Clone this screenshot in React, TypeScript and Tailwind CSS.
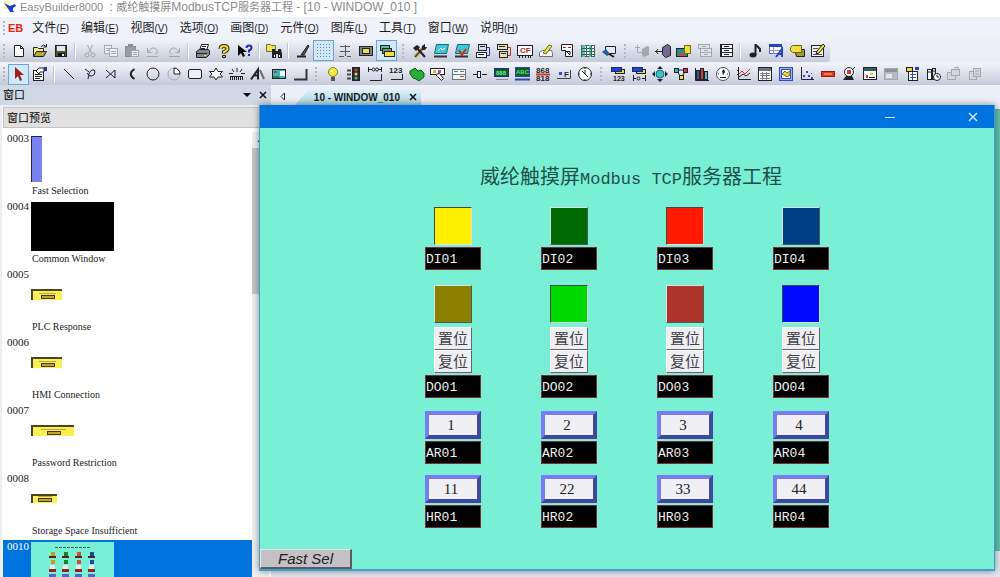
import React from 'react';
import type { ReactNode } from 'react';

type Icon = [label: string, art: ReactNode, active?: boolean];

const K = '#20222a';
const GREY = '#a4a6b0';

/* small building blocks shared by several toolbar drawings */
const line = (d: string, stroke = K, width = 1) => (
  <path d={d} stroke={stroke} strokeWidth={width} fill="none" />
);
const box = (x: number, y: number, w: number, h: number, fill = '#fff', stroke = K) => (
  <rect x={x + 0.5} y={y + 0.5} width={w - 1} height={h - 1} fill={fill} stroke={stroke} />
);
const caption = (text: string, x: number, y: number, fill = K, size = 7) => (
  <text x={x} y={y} fontSize={size} fontWeight="bold" fontFamily="Liberation Sans, sans-serif" fill={fill}>
    {text}
  </text>
);

const fileIcons: Icon[] = [
  ['New', <path d="M3.5 2.5h6l3 3v8h-9zM9.5 2.5v3h3" fill="#fff" stroke={K} />],
  ['Open', <>
    <path d="M1.5 13.5v-9h4l1 1h5v3" fill="#f4ee7a" stroke={K} />
    <path d="M1.5 13.5l3-5h10l-3 5z" fill="#b3a93a" stroke={K} />
    {line('M9 3.5q3-3 5 0M14.500 1v3h-3')}
  </>],
  ['Save', <>
    {box(2, 2, 12, 12, '#55562e')}
    <path d="M4 3h8v5H4z" fill="#e6e8ef" />
    <path d="M5 10h7v4H5z" fill="#16171b" />
    <path d="M9 11h2v2H9z" fill="#e6e8ef" />
  </>],
];

const editIcons: Icon[] = [
  ['Cut', <>
    {line('M5.500 2l4 8M10.500 2l-4 8', GREY)}
    <circle cx="5" cy="12" r="2" fill="none" stroke={GREY} />
    <circle cx="11" cy="12" r="2" fill="none" stroke={GREY} />
  </>],
  ['Copy', <>
    {box(1, 2, 8, 9, '#eceef5', GREY)}
    {box(6, 5, 9, 9, '#eceef5', GREY)}
    {line('M3 5.500h3M3 7.500h3M8 8.500h5M8 10.500h5', GREY)}
  </>],
  ['Paste', <>
    {box(1, 3, 11, 11, '#9a9ca5', '#8b8d96')}
    <path d="M4 1h5v3H4z" fill="#8b8d96" />
    {box(7, 7, 8, 7, '#eceef5', GREY)}
    {line('M9 9.500h4M9 11.500h4', GREY)}
  </>],
  ['Undo', line('M2.500 5v4.500h4M3 9q5-7 9-2q2 3-2 4M2 13.500h11', GREY)],
  ['Redo', line('M13.500 5v4.500h-4M13 9q-5-7-9-2q-2 3 2 4M3 13.500h11', GREY)],
];

const helpIcons: Icon[] = [
  ['Print', <>
    <path d="M4.500 7.500l2-6h7l-2 6z" fill="#fff" stroke={K} />
    <path d="M1.500 8.500l3-2h9l1 1v4l-3 3h-10z" fill="#85868c" stroke={K} />
    {line('M2 10.500h10M7 3.500h4M6 5.500h4', K)}
    <path d="M9 12h2v1H9z" fill="#f0e33a" />
  </>],
  ['Help', <>
    <path d="M4.500 6q0-3 3.500-3t3.500 2.500q0 2-3.500 3.500v1.500" stroke={K} strokeWidth="4" fill="none" />
    <path d="M4.500 6q0-3 3.500-3t3.500 2.500q0 2-3.500 3.500v1" stroke="#f4df21" strokeWidth="2" fill="none" />
    <path d="M6.500 12.500h3v2h-3z" fill="#e8d21f" stroke={K} />
  </>],
  ['Context help', <>
    <path d="M1 2v11l3-3 2 4 2-1-2-4h4z" fill="#08090c" />
    <path d="M9.500 5q0-2.500 2.500-2.500t2.500 2q0 2-2.500 3v2M12 11v2" stroke="#1c2fa8" strokeWidth="2" fill="none" />
  </>],
];

const findIcons: Icon[] = [
  ['Find', <>
    <path d="M.5 1.500h4l1 1h4v6h-9z" fill="#e9e45c" stroke="#77732a" />
    <path d="M6 6h3v2h3V6h3l1 5v4h-4v-4h-2v4H6v-4z" fill={K} />
    <path d="M8 12h1v2H8zM13 12h1v2h-1z" fill="#fff" />
  </>],
];

const viewIcons: Icon[] = [
  ['Pen', <>
    <path d="M6 12l7-10 1 1-5 9z" fill="#4f5158" stroke={K} />
    {line('M2 13.500h9', K, 2)}
  </>],
  ['Grid', <g fill="#4b83c3">
    {[1, 4, 7, 10, 13].map((y) => [1, 4, 7, 10, 13].map((x) => <rect key={`${x}-${y}`} x={x} y={y} width="1" height="1" />))}
  </g>, true],
  ['Align', line('M3 3.500h10M8.500 2v11M3 8.500h10M2 13.500h5M10 13.500h4', '#555862')],
  ['Window', <>{box(1, 3, 14, 10, '#7d8088')}{box(4, 5, 8, 6, '#f2e13b')}</>],
  ['Layers', <>
    {box(1, 2, 10, 6, '#67b5a3')}{box(3, 5, 10, 6, '#5aa06c')}{box(5, 8, 11, 6, '#f2e13b')}
  </>, true],
];

const compileIcons: Icon[] = [
  ['System parameters', <>
    {line('M3 14l8-9', '#b28b28', 3)}{line('M3 14l8-9')}
    {line('M5 5l8 9', K, 2)}
    <path d="M1 5l4-3 3 2-4 4zM10 3l3-2v3h2l-2 3h-3z" fill={K} />
  </>],
  ['Online simulation', <>
    <path d="M3.500 1.500h12l-2 9h-12z" fill="#41c6d6" stroke="#126d7d" />
    {line('M5 8l3-3 1 2 3-2', '#fff')}{line('M1 13.500h13', '#333', 2)}
  </>],
  ['Offline simulation', <>
    <path d="M3.500 1.500h12l-2 9h-12z" fill="#41c6d6" stroke="#126d7d" />
    {line('M5 7l3 5 4-6', '#cf2e22', 2)}{line('M1 13.500h13', '#333', 2)}
  </>],
  ['Download', <>
    {box(3, 1, 9, 7, '#d9dce6')}{box(1, 9, 11, 6, '#f4f5f9')}
    {line('M5 3.500h5M3 11.500h6')}{line('M12 4.500h2.500v8H12', '#2334b4')}
  </>],
  ['Upload', <>
    {box(1, 1, 11, 6, '#e9e2b0')}{box(3, 8, 9, 7, '#e9e2b0')}
    {line('M3 3.500h6M5 10.500h5')}{line('M12 4.500h2.500v8H12', '#c2281e')}
  </>],
  ['CF card', <>
    {box(0, 2, 16, 11, '#fff')}{caption('CF', 3, 10, '#b91f1f', 8)}
    {line('M2.500 13v2M5.500 13v2M8.500 13v2M11.500 13v2M13.500 13v2')}
  </>],
  ['Edit label', <>
    <path d="M1.500 9.500l3-2h9l1 3v3h-13z" fill="#fff" stroke="#6b6e78" />
    <path d="M5 10l6-8 3 1-6 8z" fill="#efe640" stroke="#6c6820" />
  </>],
  ['Tag report', <>
    <path d="M2.500 1.500h11v12h-7v-6h-4z" fill="#fff" stroke={K} />
    {line('M4 4.500h3M9 4.500h3', '#a3271e')}{line('M6 7l5 5M8 8.500h3v3')}
  </>],
  ['Address table', <>
    {box(1, 2, 14, 12, '#fff', '#2d6a5c')}
    <path d="M2 2h3v12H2zM9 2h2v12H9z" fill="#69bea7" />
    {line('M1 5.500h14M1 8.500h14M1 11.500h14M6.500 2v12M11.500 2v12', '#2d6a5c')}
  </>],
  ['Recipe viewer', <>
    <path d="M4.500 3.500h10v7h-10z" fill="#e7eaf2" stroke={K} />
    <path d="M1 9l4-3 4 5-3 2z" fill="#215c98" />
    {line('M8 11l5 3', K, 2)}
  </>],
];

const libraryIcons: Icon[] = [
  ['Import', <>{line('M3.500 2v7.500H8M1 4.500h5', GREY)}<path d="M8 6l5-3 2 1v8l-5 2-2-2z" fill={GREY} /></>],
  ['Export', <>
    <path d="M7.500 4.500l5-3 3 2v9l-5 2-3-3z" fill="#77688d" stroke={K} />
    {line('M0 8.500h7M3 6L1 8.500 3 11', K)}
  </>],
  ['Picture library', <>
    {box(0, 5, 12, 9, '#2c8d86')}{box(8, 2, 7, 9, '#efe035', '#756c14')}
    <path d="M2 13l4-4 3 4z" fill="#d64a35" />
  </>],
  ['Sound library', <>{box(1, 1, 12, 5, '#e2e4ec', GREY)}{box(3, 5, 12, 5, '#e2e4ec', GREY)}{box(3, 9, 12, 5, '#e2e4ec', GREY)}{line('M7 11.500h4M5 3.500h4M7 7.500h4', GREY)}</>],
  ['Group library', <>{box(2, 1, 13, 5, '#f4f5f9')}{box(2, 5, 13, 5, '#f4f5f9')}{box(2, 9, 13, 5, '#f4f5f9')}{line('M6 3.500h5M6 7.500h5M6 11.500h5M3.500 1v13')}</>],
];

const resourceIcons: Icon[] = [
  ['Sound', <>
    {line('M8.500 1v11', K, 2)}{line('M9 2l4 4v3', K, 2)}
    <ellipse cx="6" cy="12" rx="3.500" ry="2.500" fill={K} />
  </>],
  ['Label library', <>
    {box(1, 1, 13, 10, '#fff', '#5c6fd0')}
    <path d="M1 1h13v3H1z" fill="#2940c8" />
    {line('M2 7.500h10M5.500 4v7', '#8e99d6')}{line('M8 14l6-8v8M10 11h4', '#2940c8', 2)}
  </>],
  ['Tag library', <>
    <path d="M5.500 6.500h10v7h-8z" fill="#a79a1c" stroke={K} />
    <path d="M1.500 4.500l2-2h9v7h-9l-2-2z" fill="#f0dd35" stroke="#6a6214" />
  </>],
  ['Macro', <>
    {box(1, 2, 13, 12, '#eef0f5')}
    {line('M3 5.500h5M3 8.500h4M3 11.500h9', '#555')}
    <path d="M6 11l1-3 6-7 2 2-6 7z" fill="#efe13b" stroke={K} />
  </>],
];

const selectIcons: Icon[] = [
  ['Select', <path d="M4 1v12l3-3 2 5 2-1-2-5h4z" fill="#9c2121" />, true],
  ['Properties', <>
    {box(1, 4, 11, 11, '#fff')}
    {line('M3 8.500h7M3 10.500h7M3 12.500h5')}
    <path d="M4 5l3-3h5v4H8l-1 2z" fill="#fff" stroke={K} />
    <path d="M12 1h3v4h-3z" fill="#283b8f" />
  </>],
];

const drawIcons: Icon[] = [
  ['Line', line('M3 3l10 10')],
  ['Polyline', line('M3 3l4 3M6 13q1-8 4-9t3 2-3 4-5-3')],
  ['Arrow', line('M3 4l9 8V4l-9 8')],
  ['Arc', line('M10.500 3Q3 8 10.500 13', K, 2)],
  ['Ellipse', <circle cx="8" cy="8" r="6" fill="none" stroke={K} />],
  ['Pie', <>
    <circle cx="8" cy="8" r="6" fill="none" stroke={GREY} />
    <path d="M8 2v6h6a6 6 0 0 0-6-6z" fill="#fff" stroke={K} />
  </>],
  ['Rectangle', <rect x="1.500" y="3.500" width="13" height="9" rx="1.500" fill="#eef0f6" stroke={K} />],
  ['Polygon', <path d="M8 2l2 3.500h4.500L12 8l2.500 3H10l-2 3-2-3H1.500L4 8 1.500 5.500H6z" fill="#fff" stroke={K} />],
  ['Scale', <>
    {line('M8 2v4M3 3l2 3M13 3l-2 3M0 7.500h4M12 7.500h4')}
    {line('M1.500 10v4M3.500 10v4M5.500 10v4M7.500 10v4M9.500 10v4M11.500 10v4M13.500 10v4')}
    {line('M1 10.500h13')}
  </>],
  ['Text', <>
    {line('M1 13.500l7-10v10M3 9.500h5', K, 2)}
    {line('M10 4l4 9', '#6b6e78', 2)}
  </>],
  ['Picture', <>
    {box(1, 3, 14, 10, '#34b9c5')}
    <path d="M9 5h5v5H9z" fill="#fff" /><path d="M2 10h6l1 2H2z" fill="#2a8544" /><path d="M3 5h3v2H3z" fill="#d43c2e" />
  </>],
  ['Vector', line('M14.500 3v10.500H2', '#33353d', 2)],
];

const objectIcons: Icon[] = [
  ['Bit lamp', <>
    <circle cx="8" cy="6" r="4.500" fill="#f6e93c" stroke="#8e831a" />
    <path d="M6 11h4v4H6z" fill="#545761" /><path d="M6 4h2v2H6z" fill="#fff" />
  </>],
  ['Word lamp', <>
    {box(6, 1, 8, 14, '#2a2c32')}
    <circle cx="10" cy="4" r="1.500" fill="#d33" /><circle cx="10" cy="8" r="1.500" fill="#f2d93a" /><circle cx="10" cy="12" r="1.500" fill="#3fc26b" />
    {line('M1 4.500h4M1 8.500h4M1 12.500h4', '#444', 2)}
  </>],
  ['Set bit', <>{line('M1.500 1v5M1 3.500h4M11 3.500h3M14.500 1v5')}<circle cx="6.500" cy="3.500" r="1.500" fill="none" stroke={K} /><circle cx="10" cy="3.500" r="1.500" fill="none" stroke={K} />{line('M3 14.500h11.500V8')}</>],
  ['Set word', <>{caption('123', 1, 7, K, 8)}{line('M3 13.500h11.500V8')}</>],
  ['Function key', <path d="M1 5l5-3 3 3 3-1 3 3v4l-5 4-3-2-3-1-3-4z" fill="#29ad35" stroke="#0e5c18" />],
  ['Toggle switch', <>
    {box(0, 2, 15, 7, '#fff')}
    <path d="M3 4h3v3H3z" fill="#d4b933" /><path d="M8 4h3v3H8z" fill="#a54a92" />
    <path d="M5.500 8.500l4-1 4 5-2 2-4-4z" fill="#fff" stroke={K} />
  </>],
  ['Multi-state switch', <>{box(1, 3, 14, 11, '#f3f5f8', '#5c7f7a')}{line('M1 8.500h14M9 5.500h4M3 5.500h4', '#5c7f7a')}<path d="M9 10h4v1H9z" fill="#d33" /></>],
  ['Slider', <>{line('M1 8.500h4M10 8.500h5')}{box(5, 5, 4, 7, '#fff')}</>],
  ['Numeric display', <>{box(1, 2, 15, 9, '#10592b', '#1a2f7c')}{caption('888', 3, 9, '#6ff088', 6)}{line('M3 13.500h12', '#8a8d97')}</>],
  ['Numeric input', <>{box(1, 1, 15, 10, '#0f5b2a', '#2444b8')}{caption('ABC', 2, 8, '#5ee07a', 6)}{line('M1 13.500h15', '#2444b8', 2)}</>],
  ['ASCII display', <>{caption('868', 1, 7, K, 8)}{caption('818', 1, 15, K, 8)}{line('M1 8.500h14', '#d3352b', 2)}</>],
  ['Indirect window', <>{line('M1 12.500h13.500V4', '#3c3f48')}<path d="M3 6h3v3H3z" fill="#2456c8" />{caption('F', 8, 11, '#2a2c48', 8)}</>],
  ['Clock', <><circle cx="8" cy="8" r="6.500" fill="#fff" stroke={K} />{line('M8 4v4l3 3M8 2v1M8 13v1M2 8h1M13 8h1M5 5l3 3')}</>],
];

const chartIcons: Icon[] = [
  ['Moving numeric', <>{box(5, 3, 10, 5, '#e9d83a')}{box(1, 1, 11, 5, '#2443c4', '#142a80')}{caption('123', 3, 15)}</>],
  ['Moving bit', <>{box(5, 3, 10, 5, '#e9d83a')}{box(1, 1, 11, 5, '#2443c4', '#142a80')}{line('M2.500 9v6M2 12.500h3M14.500 9v6M11 12.500h3')}<circle cx="7.500" cy="12.500" r="1.500" fill="none" stroke={K} /></>],
  ['Moving shape', <>
    <path d="M8 0l3 3H5zM8 16l3-3H5zM0 8l3-3v6zM16 8l-3-3v6z" fill={K} />
    <circle cx="8" cy="8" r="4" fill="#3cc0cc" stroke="#186a75" />
  </>],
  ['Animation', <>
    {line('M4 5l5 8M12 5l-4 8M4 4h9')}
    {box(1, 2, 5, 5, '#35b8b0')}{box(10, 2, 5, 5, '#cf3c30')}{box(6, 9, 5, 5, '#efe13b')}
  </>],
  ['Bar graph', <>{box(2, 4, 4, 10, '#35589e')}{box(6, 2, 4, 12, '#cf3c30')}{box(10, 5, 4, 9, '#58b6d8')}{line('M1.500 2v12.500H15')}</>],
  ['Meter', <><circle cx="8" cy="8" r="6.500" fill="#fff" stroke="#4d5059" /><path d="M7 5l2-2 1 3-2 3z" fill={K} />{line('M3 8h1M12 8h1M5 11.500h6')}</>],
  ['Trend', <>{line('M2.500 1v12.500H15M1 4.500h2M1 8.500h2')}{line('M3 8l3-3 3 3 5-5', '#d2352a')}{line('M3 11l4-3 3 2 4-3')}</>],
  ['History table', <>{box(1, 1, 14, 14, '#fff')}<path d="M2 2h12v3H2z" fill="#70737d" />{line('M3 7.500h10M3 9.500h10M3 12.500h10M5.500 6v8M9.500 6v8', '#7d808a')}</>],
  ['Data block', <>{box(1, 1, 14, 14, '#9db4ec', '#2b4cc4')}{box(3, 3, 10, 10, '#fff', '#2b4cc4')}<path d="M4 8l3-3 2 2 3-2v4l-3 2-3-2z" fill="#e4d53a" stroke="#6e6820" /></>],
  ['XY plot', <>{line('M2.500 1v12.500H15')}<path d="M4 9h2v2H4zM7 5h2v2H7zM9 9h2v2H9zM12 11h2v2h-2zM12 7h1v1h-1z" fill="#2b4cc4" /></>],
  ['Alarm bar', <>{box(1, 5, 14, 6, '#e23a1f', '#9a1e10')}{line('M4 8h8', '#ffb39c')}</>],
  ['Alarm display', <><circle cx="8" cy="6" r="4.500" fill="#fff" stroke={K} /><path d="M6 4h4v4H6z" fill="#cf3c30" /><path d="M2 14l3-4h6l2 4z" fill={K} />{line('M12 3l2-2')}</>],
  ['Event display', <>{box(1, 1, 14, 13, '#fff')}<path d="M2 2h12v3H2z" fill="#2f6250" /><path d="M8 7h3v2H8z" fill="#e0c833" /><path d="M4 9h2v3H4z" fill="#d33" />{line('M7 11.500h6')}</>],
  ['Media', <>{box(1, 2, 14, 12, '#b9bbc4', GREY)}<path d="M2 3h12v3H2z" fill="#8f929c" /><path d="M3 8h6v4H3z" fill="#e5e7ee" /></>],
  ['Recipe transfer', <>{box(2, 1, 7, 5, '#e8d73a')}{box(4, 5, 10, 10, '#fff')}{line('M6 8.500h6M6 11.500h6M8.500 6v8', '#3050b8')}<path d="M11 1h4v3h-4z" fill="#2443c4" /></>],
  ['Scheduler', <>{box(2, 3, 5, 11, '#fff')}{box(7, 2, 4, 12, '#d9dce6')}<circle cx="12" cy="11" r="3.500" fill="#fff" stroke={K} />{line('M12 9v2h2M3 6h3M8 5h2')}</>],
  ['Backup', <>{box(1, 6, 9, 8, '#d5d7df', GREY)}{box(5, 3, 9, 7, '#d5d7df', GREY)}{line('M8 2l4-1v3', GREY)}</>],
  ['PLC control', <>{box(2, 5, 8, 9, '#d5d7df', GREY)}{box(6, 2, 8, 9, '#d5d7df', GREY)}{line('M8 5h4M8 8h4', GREY)}</>],
];

const menus = [
  ['文件', 'F'], ['编辑', 'E'], ['视图', 'V'], ['选项', 'O'], ['画图', 'D'],
  ['元件', 'O'], ['图库', 'L'], ['工具', 'T'], ['窗口', 'W'], ['说明', 'H'],
];

function Grip() {
  return (
    <span className="flex w-3 shrink-0 flex-col items-center gap-[2px]">
      {[0, 1, 2, 3].map((i) => <i key={i} className="size-[2px] bg-[#b4b8c8]" />)}
    </span>
  );
}

function Divider() {
  return <span className="mx-[3px] h-4 w-[2px] shrink-0 border-l border-[#c3c6d4] bg-white" />;
}

function IconGroup({ icons }: { icons: Icon[] }) {
  return (
    <>
      {icons.map(([label, art, active]) => (
        <button
          key={label}
          aria-label={label}
          className={`flex h-[21px] w-[21px] shrink-0 items-center justify-center ${active ? 'border border-[#66a7d8] bg-[#d3e8f6]' : ''}`}
        >
          <svg viewBox="0 0 16 16" className="size-4 shrink-0">{art}</svg>
        </button>
      ))}
    </>
  );
}

/* ---- docked window list ---- */

function Popup({ size }: { size: string }) {
  return (
    <div className={`flex flex-col items-center justify-end border-l-2 border-t-2 border-[#4a4622] bg-[#fbf04f] pb-px ${size}`}>
      <span className="mb-px h-px w-3/5 bg-[#b3a93c]" />
      <span className="h-[4px] w-[14px] border border-[#3b3718] bg-[#c9a32e]" />
    </div>
  );
}

function PageThumb() {
  const lamps = ['#b8a414', '#12852a', '#d14a3c', '#24479c'];
  return (
    <svg viewBox="0 0 83 49" className="h-[49px] w-[83px] bg-[#79f0d6]">
      <path d="M24 5.500h36" stroke="#2e6b62" strokeDasharray="3 1" />
      {lamps.map((c, i) => (
        <g key={c} transform={`translate(${18 + i * 13} 0)`}>
          <rect x="2" y="10" width="4" height="4" fill={c} />
          <rect y="14" width="7" height="2" fill="#5b1f20" />
          <rect x="2" y="18" width="4" height="4" fill={c} />
          <rect x="1" y="23" width="5" height="4" fill="#e9e9ee" />
          <rect y="27" width="7" height="3" fill="#8c2325" />
          <rect y="32" width="7" height="3" fill="#5a5fc4" />
        </g>
      ))}
    </svg>
  );
}

const windows: { id: string; name?: string; thumb: ReactNode; selected?: boolean }[] = [
  { id: '0003', name: 'Fast Selection', thumb: <div className="h-[46px] w-[11px] border-l border-t border-[#23264f] bg-[#7a84f0]" /> },
  { id: '0004', name: 'Common Window', thumb: <div className="h-[49px] w-[83px] bg-black" /> },
  { id: '0005', name: 'PLC Response', thumb: <Popup size="h-[11px] w-[31px]" /> },
  { id: '0006', name: 'HMI Connection', thumb: <Popup size="h-[11px] w-[31px]" /> },
  { id: '0007', name: 'Password Restriction', thumb: <Popup size="h-[11px] w-[43px]" /> },
  { id: '0008', name: 'Storage Space Insufficient', thumb: <Popup size="h-[9px] w-[26px]" /> },
  { id: '0010', thumb: <PageThumb />, selected: true },
];

function WindowDock() {
  return (
    <aside className="flex w-[271px] shrink-0 flex-col overflow-hidden bg-[#f3f4f8]">
      <div className="flex h-[20px] shrink-0 items-center bg-[#d0d8e6] pl-[3px] pr-1 text-[11px] text-black">
        <h2 className="flex-1">窗口</h2>
        <button aria-label="Dock menu" className="mr-2">
          <svg viewBox="0 0 8 8" className="size-2"><path d="M0 2h8L4 6z" /></svg>
        </button>
        <button aria-label="Close dock">
          <svg viewBox="0 0 8 8" className="size-2"><path d="M1 1l6 6M7 1L1 7" stroke="#111" strokeWidth="1.5" /></svg>
        </button>
      </div>
      <div className="flex min-h-0 flex-1 flex-col border-l-2 border-t-2 border-[#eceef4] bg-white pl-px">
        <select
          aria-label="窗口预览"
          className="h-[21px] w-full shrink-0 appearance-none border border-[#c3c3c3] bg-[#e1e1e1] px-[3px] pt-px text-[11px] text-black"
        >
          <option>窗口预览</option>
        </select>
        <div className="flex min-h-0 flex-1 pt-1">
          <ul className="w-[249px] shrink-0 font-['Liberation_Serif',serif] text-[11px] leading-3">
            {windows.map((w) => (
              <li key={w.id} className={`flex h-[68px] pl-1 ${w.selected ? 'bg-[#0073de] text-white' : 'text-[#1c1c1c]'}`}>
                <span className="w-6 shrink-0">{w.id}</span>
                <div>
                  <div className="mb-[2px] flex h-[51px] items-center pt-[2px]">{w.thumb}</div>
                  {w.name && <p className="pl-px text-[10px]">{w.name}</p>}
                </div>
              </li>
            ))}
          </ul>
          <div className="flex w-[17px] flex-col items-center bg-[#f0f0f0]">
            <button aria-label="Scroll up" className="h-4">
              <svg viewBox="0 0 8 8" className="size-2"><path d="M1 6l3-4 3 4" fill="none" stroke="#444" /></svg>
            </button>
            <span className="h-[146px] w-full bg-[#c6c6c6]" />
          </div>
        </div>
      </div>
    </aside>
  );
}

/* ---- simulated HMI screen ---- */

const sunken = 'border-t-[#3b4a45] border-l-[#3b4a45] border-b-[#d5e4df] border-r-[#d5e4df]';
const raised = 'border-t-[#d5e4df] border-l-[#d5e4df] border-b-[#4a5a55] border-r-[#4a5a55]';

const channels = [
  { n: 1, input: 'bg-[#fff000]', inputEdge: sunken, output: 'bg-[#8b8000]', outputEdge: raised },
  { n: 2, input: 'bg-[#006b00]', inputEdge: raised, output: 'bg-[#00d900]', outputEdge: sunken },
  { n: 3, input: 'bg-[#ff1a00]', inputEdge: sunken, output: 'bg-[#ae332b]', outputEdge: raised },
  { n: 4, input: 'bg-[#003f83]', inputEdge: raised, output: 'bg-[#000cff]', outputEdge: sunken },
];

function Tag({ children }: { children: ReactNode }) {
  return (
    <div className="mt-[2px] h-[23px] w-full border border-[#7b2f35] bg-black font-['Liberation_Mono',monospace] text-[13px] leading-[23px] text-[#f0f0f0]">
      {children}
    </div>
  );
}

function Register({ label, value }: { label: string; value: string }) {
  return (
    <input
      aria-label={label}
      defaultValue={value}
      className="h-7 w-full border-4 border-b-[#42479c] border-l-[#767df0] border-r-[#42479c] border-t-[#767df0] bg-[#f0eff4] pr-1 text-center font-['Liberation_Serif',serif] text-[15px] text-[#222]"
    />
  );
}

function Command({ children }: { children: ReactNode }) {
  return (
    <button className="h-[23px] w-[38px] border border-b-[#60656a] border-l-white border-r-[#60656a] border-t-white bg-[#efeef2] text-[15px] leading-[21px] text-[#3f4247]">
      {children}
    </button>
  );
}

function Channel({ channel }: { channel: (typeof channels)[number] }) {
  const { n, input, inputEdge, output, outputEdge } = channel;
  return (
    <section className="flex w-14 flex-col items-center">
      <div className={`size-[38px] border ${input} ${inputEdge}`} />
      <Tag>DI0{n}</Tag>
      <div className={`mb-1 mt-[15px] size-[38px] border ${output} ${outputEdge}`} />
      <Command>置位</Command>
      <Command>复位</Command>
      <Tag>DO0{n}</Tag>
      <div className="mt-[13px] w-full">
        <Register label={`AR0${n}`} value={`${n}`} />
        <Tag>AR0{n}</Tag>
      </div>
      <div className="mt-[11px] w-full">
        <Register label={`HR0${n}`} value={`${n}${n}`} />
        <Tag>HR0{n}</Tag>
      </div>
    </section>
  );
}

function Simulator() {
  return (
    <div className="absolute bottom-[6px] left-[259px] right-[5px] top-[105px] flex flex-col border-x border-b-2 border-[#3f9fd0] bg-[#79f0d6] shadow-[0_0_7px_rgba(0,0,0,0.45)]">
      <header className="flex h-[23px] shrink-0 items-center justify-end bg-[#0073de] pr-4">
        <button aria-label="Minimize" className="mr-[73px]">
          <svg viewBox="0 0 10 10" className="size-[10px]"><path d="M0 5.500h10" stroke="#d8ecff" /></svg>
        </button>
        <button aria-label="Close">
          <svg viewBox="0 0 10 10" className="size-[10px]"><path d="M1 1l8 8M9 1L1 9" stroke="#d8ecff" strokeWidth="1.3" /></svg>
        </button>
      </header>
      <h1 className="mt-[39px] pl-2 text-center font-['Liberation_Mono','Noto_Sans_CJK_SC',monospace] text-[20px] leading-6 text-[#1f4f4b]">
        威纶触摸屏<span className="text-[17px]">Modbus TCP</span>服务器工程
      </h1>
      <div className="mt-[15px] flex justify-center gap-[60px]">
        {channels.map((c) => <Channel key={c.n} channel={c} />)}
      </div>
      <button className="mt-auto h-5 w-[92px] shrink-0 border border-b-2 border-r-2 border-b-[#5b5b5b] border-l-[#e4e4e4] border-r-[#5b5b5b] border-t-[#e4e4e4] bg-[#c3c1c3] text-[15px] italic leading-[18px] text-[#222]">
        Fast Sel
      </button>
    </div>
  );
}

export default function App() {
  return (
    <div className="relative flex h-screen flex-col overflow-hidden bg-[#eceffa] font-['Liberation_Sans','Noto_Sans_CJK_SC',sans-serif]">
      <div className="flex h-[17px] shrink-0 items-center bg-white pb-[3px] pl-1 text-[11px] leading-[14px] text-[#8b8b8b]">
        <svg viewBox="0 0 14 12" className="mr-[2px] h-3 w-[14px] shrink-0">
          <path d="M0 0h7v8H0z" fill="#fbf6b8" />
          <path d="M0 2l6 3 5-2 1 2-3 2v3l2 1H6L5 9z" fill="#1b3fd6" />
        </svg>
        <p className="whitespace-pre">
          EasyBuilder8000 <span className="text-[12px]"> : </span>威纶触摸屏<span className="text-[12px]">ModbusTCP</span>服务器工程
          <span className="text-[12px]"> - [10 - WINDOW_010 ]</span>
        </p>
      </div>

      <nav className="flex h-[22px] shrink-0 items-center gap-3 bg-[#f0f2fa] text-[12px] text-[#1d1d1d]">
        <div className="-mr-[3px] flex items-center">
          <span className="flex w-2 justify-center"><Grip /></span>
          <b className="text-[11px] text-[#e4280f]">EB</b>
        </div>
        {menus.map(([name, key]) => (
          <button key={name} className="whitespace-nowrap">
            {name}<span className="text-[10px]">(<u>{key}</u>)</span>
          </button>
        ))}
      </nav>

      <div className="mb-px flex h-[23px] w-[830px] max-w-full shrink-0 items-center rounded-r bg-gradient-to-b from-[#f2f4fb] to-[#c6c9d8]">
        <span className="flex w-2 justify-center"><Grip /></span>
        <IconGroup icons={fileIcons} />
        <Divider />
        <IconGroup icons={editIcons} />
        <Divider />
        <IconGroup icons={helpIcons} />
        <Divider />
        <IconGroup icons={findIcons} />
        <Divider />
        <IconGroup icons={viewIcons} />
        <Grip />
        <IconGroup icons={compileIcons} />
        <Grip />
        <IconGroup icons={libraryIcons} />
        <Divider />
        <IconGroup icons={resourceIcons} />
      </div>

      <div className="flex h-[22px] shrink-0 items-center bg-gradient-to-b from-[#f2f4fb] to-[#c6c9d8]">
        <span className="flex w-2 justify-center"><Grip /></span>
        <IconGroup icons={selectIcons} />
        <Divider />
        <IconGroup icons={drawIcons} />
        <Grip />
        <IconGroup icons={objectIcons} />
        <Grip />
        <IconGroup icons={chartIcons} />
      </div>

      <main className="flex min-h-0 flex-1">
        <WindowDock />
        <div className="flex min-w-0 flex-1 flex-col bg-gradient-to-b from-[#eef0f9] via-[#e4e6ee] to-[#e4e6ee]">
          <div className="flex h-[20px] shrink-0 items-end pl-2">
            <button aria-label="Previous tab" className="mb-1 mr-2">
              <svg viewBox="0 0 8 9" className="h-[9px] w-2"><path d="M5.500 1v7L2 4.500z" fill="#fff" stroke="#222" /></svg>
            </button>
            <div className="flex h-4 w-[126px] items-center justify-end gap-[9px] bg-gradient-to-b from-[#dff3f8] to-[#a9d3e4] pr-1 text-[10px] font-bold text-[#15181c] [clip-path:polygon(14px_0,100%_0,100%_100%,0_100%)]">
              <span className="whitespace-nowrap">10 - WINDOW_010</span>
              <button aria-label="Close tab">
                <svg viewBox="0 0 8 8" className="size-2"><path d="M1 1l6 6M7 1L1 7" stroke="#111" strokeWidth="1.500" /></svg>
              </button>
            </div>
          </div>
          <div className="mb-[26px] ml-[9px] mt-1 flex-1 border-l border-t border-[#8e94a8] bg-[#5fc4ae]" />
        </div>
      </main>

      <Simulator />
    </div>
  );
}
